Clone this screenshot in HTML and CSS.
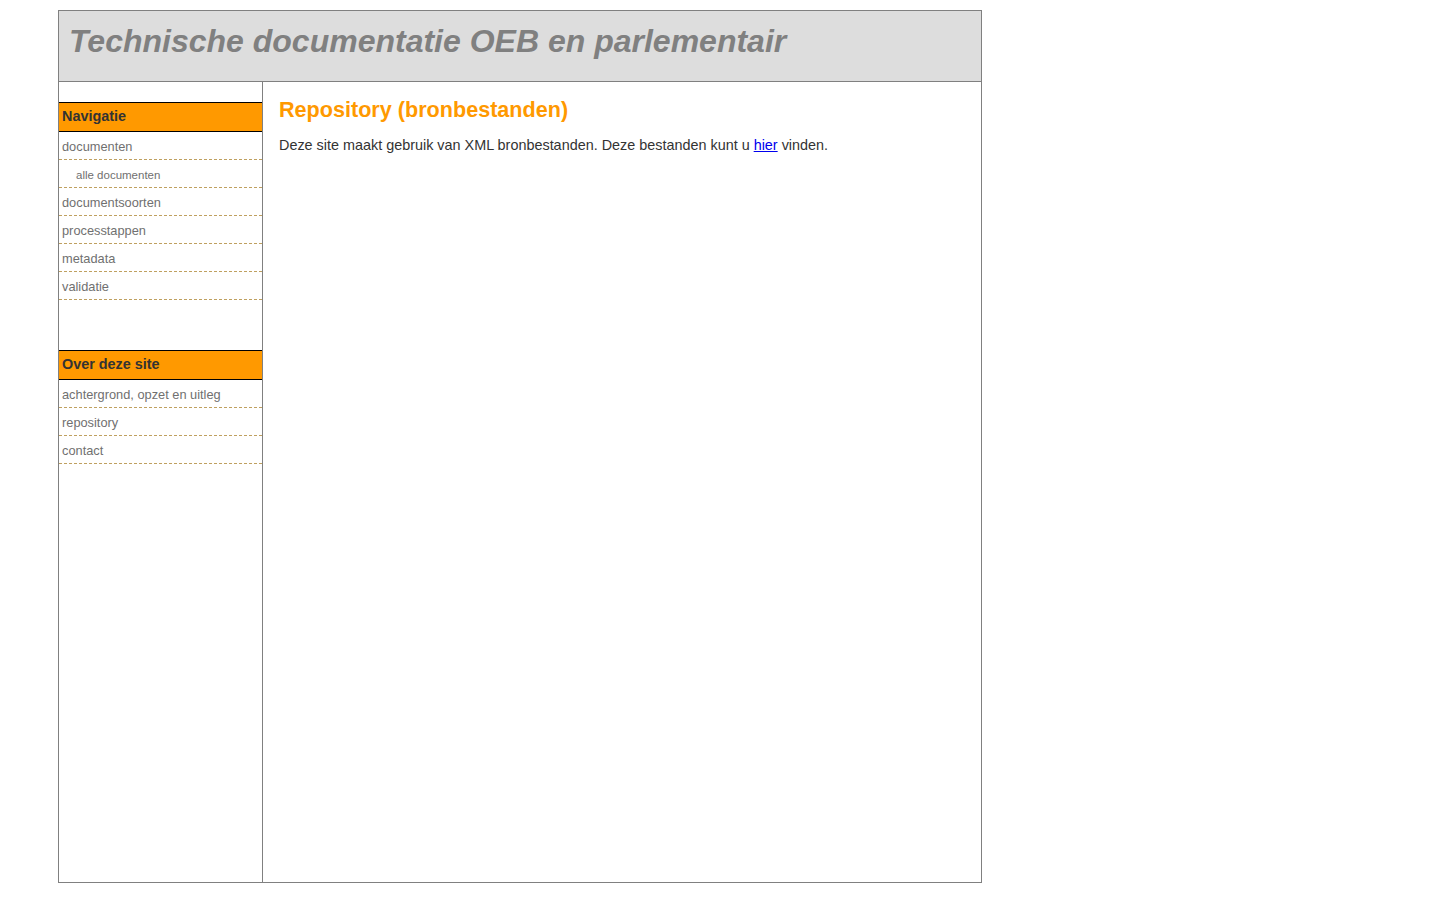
FILE: index.html
```html
<!DOCTYPE html>
<html lang="nl">
<head>
<meta charset="utf-8">
<title>Repository (bronbestanden)</title>
<link rel="stylesheet" href="styles.css">
</head>
<body>
<div class="page">
  <header class="header">
    <h1 class="site-title">Technische documentatie OEB en parlementair</h1>
  </header>
  <div class="main">
    <nav class="sidebar">
      <div class="nav-block">
        <div class="nav-head">Navigatie</div>
        <a class="nav-item" href="#">documenten</a>
        <a class="nav-item sub" href="#">alle documenten</a>
        <a class="nav-item" href="#">documentsoorten</a>
        <a class="nav-item" href="#">processtappen</a>
        <a class="nav-item" href="#">metadata</a>
        <a class="nav-item" href="#">validatie</a>
      </div>
      <div class="nav-block second">
        <div class="nav-head">Over deze site</div>
        <a class="nav-item" href="#">achtergrond, opzet en uitleg</a>
        <a class="nav-item" href="#">repository</a>
        <a class="nav-item" href="#">contact</a>
      </div>
    </nav>
    <section class="content">
      <h2 class="page-title">Repository (bronbestanden)</h2>
      <p class="text">Deze site maakt gebruik van XML bronbestanden. Deze bestanden kunt u <a href="#" class="link">hier</a> vinden.</p>
    </section>
  </div>
</div>
</body>
</html>
```
FILE: styles.css
```css
html, body {
  margin: 0;
  padding: 0;
  background: #fff;
}
body {
  font-family: "Liberation Sans", Arial, sans-serif;
}
.page {
  margin: 10px 0 0 58px;
  width: 922px;
  border: 1px solid #808080;
}
.header {
  height: 70px;
  background: #dddddd;
  border-bottom: 1px solid #808080;
  box-sizing: content-box;
}
.site-title {
  margin: 0;
  padding: 12px 0 0 10px;
  font-size: 32px;
  line-height: 37px;
  font-style: italic;
  font-weight: bold;
  color: #808080;
}
.main {
  display: flex;
  height: 800px;
}
.sidebar {
  width: 203px;
  flex: none;
  border-right: 1px solid #808080;
  padding-top: 20px;
}
.nav-block.second {
  margin-top: 50px;
}
.nav-head {
  background: #ff9900;
  border-top: 1px solid #000;
  border-bottom: 1px solid #000;
  height: 28px;
  line-height: 26px;
  padding-left: 3px;
  font-size: 14.4px;
  font-weight: bold;
  color: #333;
}
.nav-item {
  display: block;
  height: 27px;
  line-height: 30px;
  padding-left: 3px;
  border-bottom: 1px dashed #bfa060;
  font-size: 12.8px;
  color: #707070;
  text-decoration: none;
}
.nav-item.sub {
  padding-left: 17px;
  font-size: 11.5px;
}
.content {
  flex: 1;
  padding: 15px 16px 0 16px;
}
.page-title {
  margin: 0;
  font-size: 21.6px;
  line-height: 25px;
  font-weight: bold;
  color: #ff9900;
}
.text {
  margin: 15px 0 0 0;
  font-size: 14.4px;
  line-height: 17px;
  color: #333;
}
.link {
  color: #0000ee;
  text-decoration: underline;
}
```
